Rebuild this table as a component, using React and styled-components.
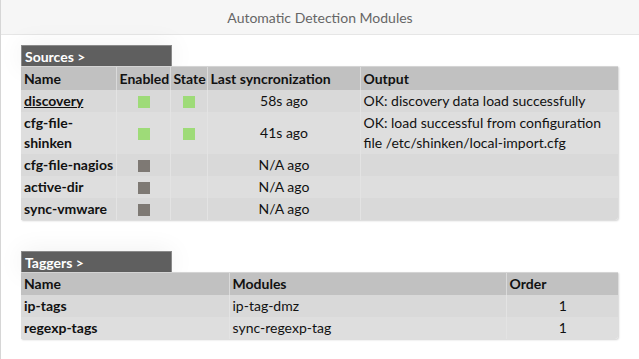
import React from "react";
import styled, { createGlobalStyle } from "styled-components";

const Global = createGlobalStyle`
  html, body { margin: 0; padding: 0; background: #fff; }
  body { font-family: Lato, "Open Sans", sans-serif; font-size: 14px; color: #111; }
`;

const Page = styled.div`
  border-left: 1px solid #d6d6d6;
  min-height: 359px;
  box-sizing: border-box;
`;

const TitleBar = styled.div`
  height: 34px;
  display: flex;
  align-items: center;
  justify-content: center;
  background: #f6f6f6;
  border-bottom: 1px solid #e6e6e6;
  color: #666;
  font-size: 14px;
`;

const Content = styled.div`
  padding: 10px 21px 0 20px;
  display: flex;
  flex-direction: column;
  gap: 31px;
`;

const Section = styled.section`
  display: flex;
  flex-direction: column;
`;

const Tab = styled.div`
  width: 146px;
  height: 20px;
  background: #5f5f5f;
  border: 1px solid #8a8a8a;
  border-bottom: none;
  color: #fff;
  font-weight: bold;
  font-size: 14px;
  line-height: 21px;
  padding-left: 3px;
  box-sizing: content-box;
  box-shadow: 0 0 26px rgba(0, 0, 0, 0.07);
`;

const Table = styled.table`
  width: 597px;
  border-collapse: collapse;
  table-layout: fixed;
  box-shadow: 1px 1px 2px rgba(0, 0, 0, 0.18);
  border-bottom-right-radius: 3px;
  overflow: hidden;
`;

const Th = styled.th`
  background: #c1c1c1;
  text-align: left;
  font-weight: bold;
  height: 23px;
  padding: 0 2px 0 3px;
  border-left: 1px solid #dadada;
  border-top: 1px solid #d4d4d4;
  box-sizing: border-box;
  white-space: nowrap;
  &:first-child { border-left: none; }
`;

const Tr = styled.tr`
  background: ${(p) => (p.$alt ? "#dedede" : "#d9d9d9")};
`;

const Td = styled.td`
  height: 22px;
  padding: 1px 2px 1px 3px;
  line-height: 20px;
  border-left: 1px solid #e3e3e3;
  box-sizing: border-box;
  text-align: ${(p) => p.$align || "left"};
  font-weight: ${(p) => (p.$bold ? "bold" : "normal")};
  vertical-align: middle;
  &:first-child { border-left: none; }
`;

const Link = styled.a`
  color: #111;
  text-decoration: underline;
  font-weight: bold;
`;

const Square = styled.span`
  display: inline-block;
  width: 12px;
  height: 12px;
  vertical-align: middle;
  background: ${(p) => (p.$on ? "#9edb78" : "#7e7974")};
`;

const sources = [
  { name: "discovery", link: true, enabled: true, state: true, last: "58s ago", output: "OK: discovery data load successfully" },
  { name: "cfg-file-shinken", enabled: true, state: true, last: "41s ago", output: "OK: load successful from configuration file /etc/shinken/local-import.cfg" },
  { name: "cfg-file-nagios", enabled: false, state: null, last: "N/A ago", output: "" },
  { name: "active-dir", enabled: false, state: null, last: "N/A ago", output: "" },
  { name: "sync-vmware", enabled: false, state: null, last: "N/A ago", output: "" },
];

const taggers = [
  { name: "ip-tags", module: "ip-tag-dmz", order: 1 },
  { name: "regexp-tags", module: "sync-regexp-tag", order: 1 },
];

export default function App() {
  return (
    <>
      <Global />
      <Page>
        <TitleBar>Automatic Detection Modules</TitleBar>
        <Content>
          <Section>
            <Tab>Sources &gt;</Tab>
            <Table>
              <colgroup>
                <col style={{ width: 95 }} />
                <col style={{ width: 54 }} />
                <col style={{ width: 37 }} />
                <col style={{ width: 153 }} />
                <col />
              </colgroup>
              <thead>
                <tr>
                  <Th>Name</Th>
                  <Th>Enabled</Th>
                  <Th>State</Th>
                  <Th>Last syncronization</Th>
                  <Th>Output</Th>
                </tr>
              </thead>
              <tbody>
                {sources.map((s, i) => (
                  <Tr key={s.name} $alt={i % 2 === 1}>
                    <Td $bold>{s.link ? <Link href="#">{s.name}</Link> : s.name}</Td>
                    <Td $align="center"><Square $on={s.enabled} /></Td>
                    <Td $align="center">{s.state !== null && <Square $on={s.state} />}</Td>
                    <Td $align="center">{s.last}</Td>
                    <Td>{s.output}</Td>
                  </Tr>
                ))}
              </tbody>
            </Table>
          </Section>
          <Section>
            <Tab>Taggers &gt;</Tab>
            <Table>
              <colgroup>
                <col style={{ width: 208 }} />
                <col style={{ width: 277 }} />
                <col />
              </colgroup>
              <thead>
                <tr>
                  <Th>Name</Th>
                  <Th>Modules</Th>
                  <Th>Order</Th>
                </tr>
              </thead>
              <tbody>
                {taggers.map((t, i) => (
                  <Tr key={t.name} $alt={i % 2 === 1}>
                    <Td $bold>{t.name}</Td>
                    <Td>{t.module}</Td>
                    <Td $align="center">{t.order}</Td>
                  </Tr>
                ))}
              </tbody>
            </Table>
          </Section>
        </Content>
      </Page>
    </>
  );
}
